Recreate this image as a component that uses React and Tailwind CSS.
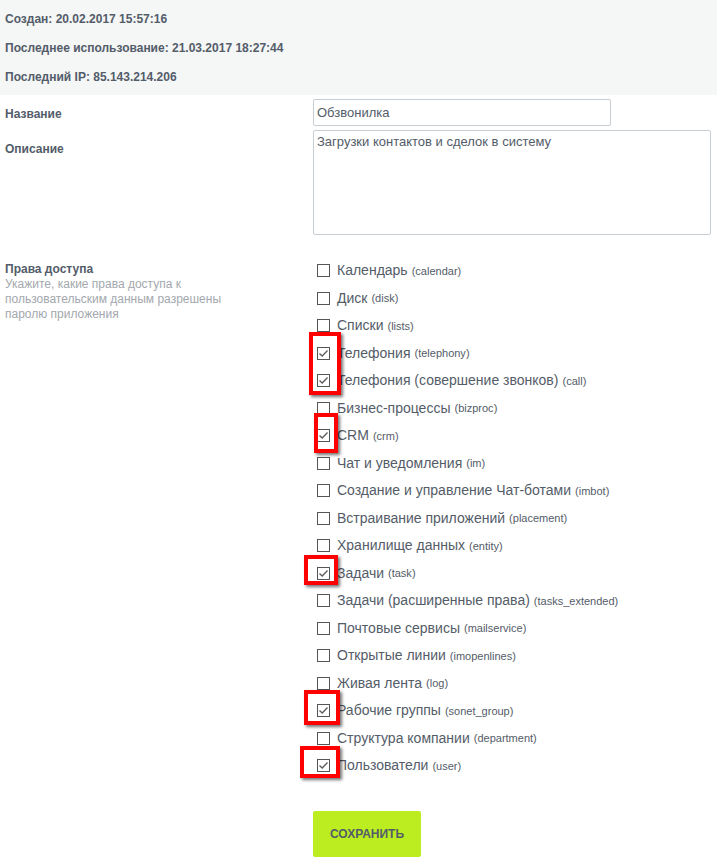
import React from 'react';

const scopes = [
  { title: 'Календарь', code: 'calendar' },
  { title: 'Диск', code: 'disk' },
  { title: 'Списки', code: 'lists' },
  { title: 'Телефония', code: 'telephony', checked: true },
  { title: 'Телефония (совершение звонков)', code: 'call', checked: true },
  { title: 'Бизнес-процессы', code: 'bizproc' },
  { title: 'CRM', code: 'crm', checked: true },
  { title: 'Чат и уведомления', code: 'im' },
  { title: 'Создание и управление Чат-ботами', code: 'imbot' },
  { title: 'Встраивание приложений', code: 'placement' },
  { title: 'Хранилище данных', code: 'entity' },
  { title: 'Задачи', code: 'task', checked: true },
  { title: 'Задачи (расширенные права)', code: 'tasks_extended' },
  { title: 'Почтовые сервисы', code: 'mailservice' },
  { title: 'Открытые линии', code: 'imopenlines' },
  { title: 'Живая лента', code: 'log' },
  { title: 'Рабочие группы', code: 'sonet_group', checked: true },
  { title: 'Структура компании', code: 'department' },
  { title: 'Пользователи', code: 'user', checked: true },
];

// red marks drawn over the screenshot
const marks = [
  'left-[309px] top-[332px] w-[32px] h-[63px]',
  'left-[314px] top-[413px] w-[24px] h-[40px]',
  'left-[304px] top-[555px] w-[34px] h-[30px]',
  'left-[304px] top-[690px] w-[36px] h-[35px]',
  'left-[300px] top-[746px] w-[40px] h-[32px]',
];

function Checkbox({ checked }) {
  return (
    <span className="flex h-[13px] w-[13px] shrink-0 items-center justify-center border border-[#555] bg-white">
      {checked && (
        <svg width="11" height="11" viewBox="0 0 11 11">
          <polyline points="1.5,5.5 4.2,8 9.5,2.5" fill="none" stroke="#5b5b5b" strokeWidth="1.3" />
        </svg>
      )}
    </span>
  );
}

export default function App() {
  return (
    <div className="relative min-h-[866px] w-[717px] bg-white text-[#535c69]" style={{ fontFamily: '"Liberation Sans", Arial, sans-serif' }}>
      <div className="bg-[#f5f6f6] px-[5px] py-[4px] text-[12px] font-bold">
        <div className="flex h-[29px] items-center">Создан: 20.02.2017 15:57:16</div>
        <div className="flex h-[29px] items-center">Последнее использование: 21.03.2017 18:27:44</div>
        <div className="flex h-[29px] items-center">Последний IP: 85.143.214.206</div>
      </div>

      <div className="mt-[4px] flex">
        <div className="w-[313px] pl-[5px] pt-[8px] text-[12px] font-bold leading-[14px]">Название</div>
        <input
          readOnly
          value="Обзвонилка"
          className="h-[27px] w-[298px] rounded-[2px] border border-[#c6cdd3] px-[3px] text-[13px] text-[#535c69] outline-none"
        />
      </div>

      <div className="mt-[4px] flex">
        <div className="w-[313px] pl-[5px] pt-[12px] text-[12px] font-bold leading-[14px]">Описание</div>
        <textarea
          readOnly
          value="Загрузки контактов и сделок в систему"
          className="h-[105px] w-[398px] resize-none rounded-[2px] border border-[#c6cdd3] px-[3px] py-[3px] text-[13px] leading-[15px] text-[#535c69] outline-none"
        />
      </div>

      <div className="mt-[22px] flex">
        <div className="w-[313px] pl-[5px] pt-[5px] text-[12px] leading-[15px]">
          <div className="font-bold">Права доступа</div>
          <div className="text-[#a3a8ae]">Укажите, какие права доступа к</div>
          <div className="text-[#a3a8ae]">пользовательским данным разрешены</div>
          <div className="text-[#a3a8ae]">паролю приложения</div>
        </div>
        <div className="flex flex-col">
          {scopes.map((s) => (
            <label key={s.code} className="flex h-[27.5px] items-center pl-[4px]">
              <Checkbox checked={s.checked} />
              <span className="ml-[7px] text-[14px] text-[#545c68]">{s.title}</span>
              <span className="ml-[4px] text-[11px] text-[#545c68]">({s.code})</span>
            </label>
          ))}
        </div>
      </div>

      <div className="mt-[31px] pl-[313px]">
        <button className="h-[46px] w-[108px] rounded-[2px] bg-[#bbed21] text-[12px] font-bold text-[#535c69]">
          СОХРАНИТЬ
        </button>
      </div>

      {marks.map((m) => (
        <div key={m} className={`absolute border-[4px] border-[#ff0000] shadow-[2px_2px_3px_rgba(0,0,0,0.55)] ${m}`} />
      ))}
    </div>
  );
}
